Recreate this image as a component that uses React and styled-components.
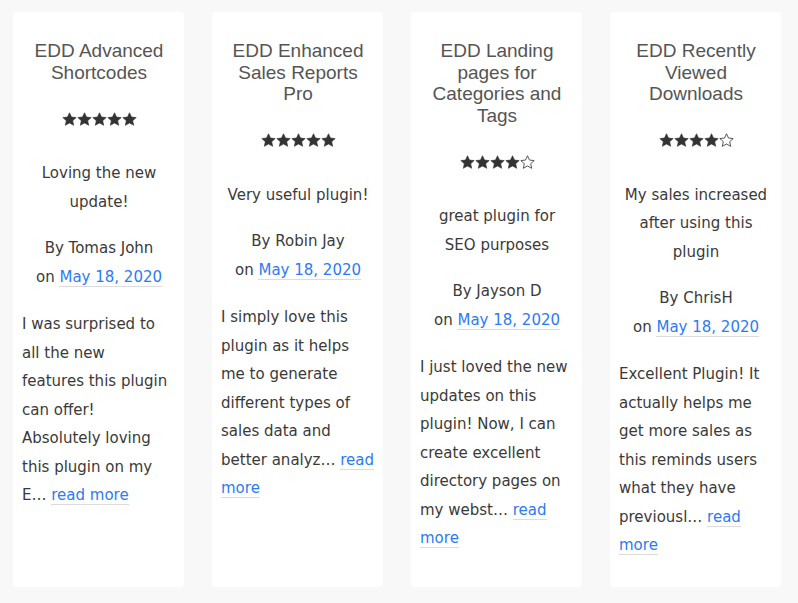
import React from "react";
import styled, { createGlobalStyle } from "styled-components";

const GlobalStyle = createGlobalStyle`
  html, body {
    margin: 0;
    padding: 0;
    background: #f8f8f8;
  }
  body {
    font-family: "DejaVu Sans", "Open Sans", sans-serif;
  }
`;

const Page = styled.div`
  display: flex;
  align-items: stretch;
  gap: 28px;
  padding: 12px 0 16px 13px;
  width: 798px;
  height: 603px;
  box-sizing: border-box;
`;

const Card = styled.div`
  width: 171px;
  flex: none;
  background: #fff;
  border-radius: 4px;
  padding: 28px 8px 20px 9px;
  box-sizing: border-box;
  display: flex;
  flex-direction: column;
`;

const Title = styled.h3`
  margin: 0;
  padding: 0 6px;
  font-family: "Liberation Sans", Arial, sans-serif;
  font-weight: 400;
  font-size: 19px;
  line-height: 21.6px;
  color: #555;
  text-align: center;
`;

const Stars = styled.div`
  margin: 27px 0 31px;
  display: flex;
  justify-content: center;
  gap: 0;
  height: 18px;
  align-items: center;
`;

const Text = styled.p`
  margin: ${(p) => p.$margin || "0"};
  font-size: 15px;
  line-height: 28.5px;
  color: #3a3a3a;
  text-align: ${(p) => p.$align || "center"};
  white-space: pre-line;
`;

const Link = styled.a`
  color: #2b7bf3;
  text-decoration: none;
  border-bottom: 1px solid #dcdcdc;
`;

const STAR = "M12 1.2l3.2 6.9 7.5.8-5.6 5 1.6 7.4L12 17.5l-6.7 3.8 1.6-7.4-5.6-5 7.5-.8z";

const Star = ({ filled }) => (
  <svg width="15" height="15" viewBox="0 0 24 24">
    <path
      d={STAR}
      fill={filled ? "#333" : "none"}
      stroke="#333"
      strokeWidth={filled ? 1 : 1.3}
      strokeLinejoin="round"
    />
  </svg>
);

const reviews = [
  {
    title: "EDD Advanced Shortcodes",
    rating: 5,
    quote: "Loving the new\nupdate!",
    author: "Tomas John",
    body: "I was surprised to\nall the new\nfeatures this plugin\ncan offer!\nAbsolutely loving\nthis plugin on my\nE… ",
    more: "read more",
  },
  {
    title: "EDD Enhanced Sales Reports Pro",
    rating: 5,
    quote: "Very useful plugin!",
    author: "Robin Jay",
    body: "I simply love this\nplugin as it helps\nme to generate\ndifferent types of\nsales data and\nbetter analyz… ",
    more: "read\nmore",
  },
  {
    title: "EDD Landing pages for Categories and Tags",
    rating: 4,
    quote: "great plugin for\nSEO purposes",
    author: "Jayson D",
    body: "I just loved the new\nupdates on this\nplugin! Now, I can\ncreate excellent\ndirectory pages on\nmy webst… ",
    more: "read\nmore",
  },
  {
    title: "EDD Recently Viewed Downloads",
    rating: 4,
    quote: "My sales increased\nafter using this\nplugin",
    author: "ChrisH",
    body: "Excellent Plugin! It\nactually helps me\nget more sales as\nthis reminds users\nwhat they have\npreviousl… ",
    more: "read\nmore",
  },
];

const App = () => {
  return (
    <>
      <GlobalStyle />
      <Page>
        {reviews.map((r) => (
          <Card key={r.title}>
            <Title>{r.title}</Title>
            <Stars>
              {[1, 2, 3, 4, 5].map((n) => (
                <Star key={n} filled={n <= r.rating} />
              ))}
            </Stars>
            <Text $margin="0 0 18px">{r.quote}</Text>
            <Text $margin="0 0 19px">
              By {r.author}
              {"\n"}on <Link href="#">May 18, 2020</Link>
            </Text>
            <Text $align="left">
              {r.body}
              <Link href="#">{r.more}</Link>
            </Text>
          </Card>
        ))}
      </Page>
    </>
  );
};

export default App;
